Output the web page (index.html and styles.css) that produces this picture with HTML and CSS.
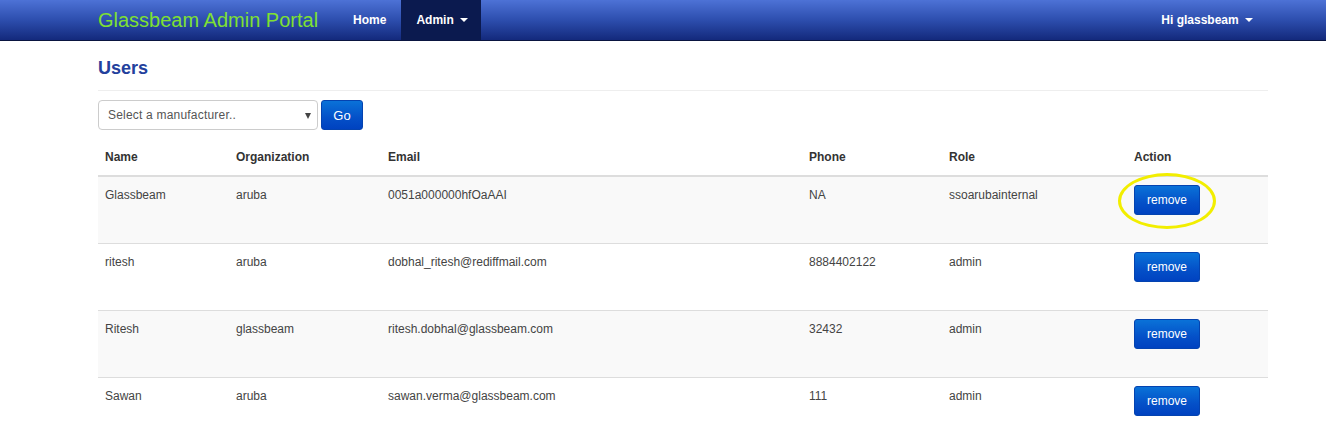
FILE: index.html
```html
<!DOCTYPE html>
<html>
<head>
<meta charset="utf-8">
<link rel="stylesheet" href="styles.css">
</head>
<body>
<nav class="navbar">
  <div class="nav-inner">
    <a class="brand">Glassbeam Admin Portal</a>
    <ul class="nav">
      <li><a>Home</a></li>
      <li class="active"><a>Admin <span class="caret"></span></a></li>
    </ul>
    <ul class="nav nav-right">
      <li><a>Hi glassbeam <span class="caret"></span></a></li>
    </ul>
  </div>
</nav>
<main class="content">
  <h2 class="page-title">Users</h2>
  <hr class="divider">
  <div class="filter">
    <div class="select">Select a manufacturer..<span class="select-arrow"></span></div>
    <button class="btn btn-go">Go</button>
  </div>
  <table class="users">
    <colgroup>
      <col style="width:131px"><col style="width:152px"><col style="width:421px"><col style="width:140px"><col style="width:185px"><col>
    </colgroup>
    <thead>
      <tr><th>Name</th><th>Organization</th><th>Email</th><th>Phone</th><th>Role</th><th>Action</th></tr>
    </thead>
    <tbody>
      <tr><td>Glassbeam</td><td>aruba</td><td>0051a000000hfOaAAI</td><td>NA</td><td>ssoarubainternal</td><td><span class="highlight"><button class="btn btn-remove">remove</button><span class="ring"></span></span></td></tr>
      <tr><td>ritesh</td><td>aruba</td><td>dobhal_ritesh@rediffmail.com</td><td>8884402122</td><td>admin</td><td><button class="btn btn-remove">remove</button></td></tr>
      <tr><td>Ritesh</td><td>glassbeam</td><td>ritesh.dobhal@glassbeam.com</td><td>32432</td><td>admin</td><td><button class="btn btn-remove">remove</button></td></tr>
      <tr><td>Sawan</td><td>aruba</td><td>sawan.verma@glassbeam.com</td><td>111</td><td>admin</td><td><button class="btn btn-remove">remove</button></td></tr>
    </tbody>
  </table>
</main>
</body>
</html>
```
FILE: styles.css
```css
* { box-sizing: border-box; }
html, body { margin: 0; padding: 0; }
body {
  font-family: "Liberation Sans", Arial, sans-serif;
  font-size: 12px;
  color: #333;
  background: #fff;
}
.navbar {
  height: 41px;
  background: linear-gradient(to bottom, #4d72d6 0%, #2d4eae 50%, #13297c 100%);
  border-bottom: 1px solid #0a1540;
}
.nav-inner {
  display: flex;
  align-items: stretch;
  height: 40px;
  padding-left: 98px;
  padding-right: 58px;
}
.brand {
  color: #7fe032;
  font-size: 20px;
  line-height: 40px;
  margin-right: 20px;
  white-space: nowrap;
}
.nav {
  list-style: none;
  margin: 0;
  padding: 0;
  display: flex;
}
.nav li a {
  display: block;
  color: #fff;
  font-weight: bold;
  font-size: 12px;
  line-height: 40px;
  padding: 0 15px;
  white-space: nowrap;
}
.nav li.active a { background: #0b1a4f; padding: 0 13px 0 15px; }
.nav-right { margin-left: auto; }
.caret {
  display: inline-block;
  width: 0; height: 0;
  border-left: 4px solid transparent;
  border-right: 4px solid transparent;
  border-top: 4px solid #fff;
  vertical-align: middle;
  margin-left: 3px;
  margin-top: -2px;
}
.content {
  margin-left: 98px;
  width: 1170px;
}
.page-title {
  margin: 0;
  padding-top: 17px;
  font-size: 18px;
  line-height: 20px;
  color: #23409c;
  font-weight: bold;
}
.divider {
  border: 0;
  border-top: 1px solid #eee;
  margin: 12px 0 9px;
}
.filter {
  display: flex;
  gap: 3px;
  height: 30px;
}
.select {
  position: relative;
  width: 220px;
  height: 30px;
  border: 1px solid #ccc;
  border-radius: 4px;
  padding: 0 9px;
  line-height: 28px;
  color: #555;
  letter-spacing: 0.2px;
}
.select-arrow {
  position: absolute;
  right: 6px;
  top: 12px;
  border-left: 3.5px solid transparent;
  border-right: 3.5px solid transparent;
  border-top: 6px solid #444;
}
.btn {
  font-family: "Liberation Sans", Arial, sans-serif;
  color: #fff;
  border: 1px solid #0443b0;
  border-radius: 3px;
  background: linear-gradient(to bottom, #0a72d8 0%, #0450c8 60%, #0042c0 100%);
  cursor: pointer;
}
.btn-go {
  width: 42px;
  height: 30px;
  font-size: 13px;
  padding: 0;
}
.users {
  width: 1170px;
  border-collapse: collapse;
  table-layout: fixed;
  margin-top: 10px;
}
.users th {
  text-align: left;
  font-weight: bold;
  padding: 9px 7px 9px;
  line-height: 17px;
  border-bottom: 2px solid #ddd;
}
.users td {
  padding: 10px 7px 0;
  line-height: 17px;
  height: 67px;
  vertical-align: top;
  border-top: 1px solid #ddd;
  color: #444;
}
.users tbody tr:nth-child(odd) td { background: #f9f9f9; }
.users tbody tr:first-child td { border-top: 0; height: 67px; }
.btn-remove {
  width: 66px;
  height: 30px;
  font-size: 12px;
  padding: 0;
  margin-top: -2px;
  vertical-align: top;
}
.highlight {
  position: relative;
  display: inline-block;
  vertical-align: top;
}
.ring {
  position: absolute;
  left: -16px;
  top: -14px;
  width: 98px;
  height: 56px;
  border: 3px solid #f2ee00;
  border-radius: 50%;
  pointer-events: none;
}
```
